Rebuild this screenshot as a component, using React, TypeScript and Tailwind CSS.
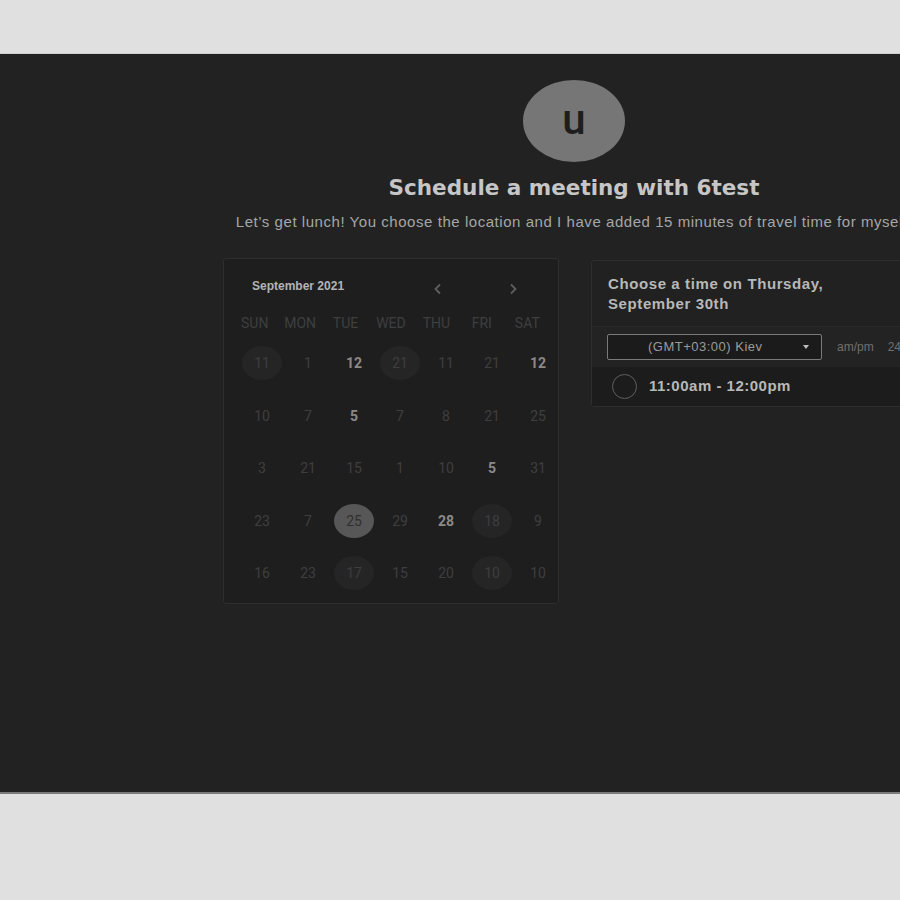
const rows: { n: string; kind?: 'bold' | 'ring' | 'sel' }[][] = [
  [{ n: '11', kind: 'ring' }, { n: '1' }, { n: '12', kind: 'bold' }, { n: '21', kind: 'ring' }, { n: '11' }, { n: '21' }, { n: '12', kind: 'bold' }],
  [{ n: '10' }, { n: '7' }, { n: '5', kind: 'bold' }, { n: '7' }, { n: '8' }, { n: '21' }, { n: '25' }],
  [{ n: '3' }, { n: '21' }, { n: '15' }, { n: '1' }, { n: '10' }, { n: '5', kind: 'bold' }, { n: '31' }],
  [{ n: '23' }, { n: '7' }, { n: '25', kind: 'sel' }, { n: '29' }, { n: '28', kind: 'bold' }, { n: '18', kind: 'ring' }, { n: '9' }],
  [{ n: '16' }, { n: '23' }, { n: '17', kind: 'ring' }, { n: '15' }, { n: '20' }, { n: '10', kind: 'ring' }, { n: '10' }],
];

const days = ['SUN', 'MON', 'TUE', 'WED', 'THU', 'FRI', 'SAT'];

function Calendar() {
  return (
    <div className="w-[336px] h-[346px] shrink-0 rounded-[3px] border border-[#2e2e2e] bg-[#1e1e1e] font-['Roboto',sans-serif]">
      <div className="flex items-center h-[53px] pl-[28px] pr-[40px] pt-[1px]">
        <span className="text-[12px] font-bold text-[#b4b4b4] font-['Liberation_Sans',sans-serif]">September 2021</span>
        <div className="ml-auto flex items-center gap-[65px] text-[#5e5e5e] mt-[6px]">
          <svg width="10" height="12" viewBox="0 0 10 12"><path d="M7 1.5 L2.5 6 L7 10.5" fill="none" stroke="currentColor" strokeWidth="1.8" /></svg>
          <svg width="10" height="12" viewBox="0 0 10 12"><path d="M3 1.5 L7.5 6 L3 10.5" fill="none" stroke="currentColor" strokeWidth="1.8" /></svg>
        </div>
      </div>
      <div className="grid grid-cols-7 px-[8px] text-[14px] text-[#3f3f3f] leading-none">
        {days.map((d) => (
          <div key={d} className="h-[22px] flex items-center justify-center">{d}</div>
        ))}
      </div>
      <div className="grid grid-cols-[repeat(7,46px)] pl-[15px] pt-[3px] text-[14px] leading-none">
        {rows.flat().map((c, i) => (
          <div key={i} className="h-[52.5px] flex items-center justify-center">
            <span
              className={
                c.kind === 'sel'
                  ? 'w-[40px] h-[34px] rounded-[50%] bg-[#575757] text-[#303030] flex items-center justify-center'
                  : c.kind === 'ring'
                  ? 'w-[40px] h-[34px] rounded-[50%] bg-[#252525] text-[#3e3e3e] flex items-center justify-center'
                  : c.kind === 'bold'
                  ? 'font-bold text-[#8a8a8a]'
                  : 'text-[#3e3e3e]'
              }
            >
              {c.n}
            </span>
          </div>
        ))}
      </div>
    </div>
  );
}

function TimePanel() {
  return (
    <div className="w-[336px] shrink-0 mt-[2px] self-start rounded-[3px] border border-[#2e2e2e] bg-[#212121] font-['Liberation_Sans',sans-serif]">
      <div className="px-[16px] pt-[13px] pb-[12px] border-b border-[#2a2a2a] text-[15px] font-bold leading-[20px] text-[#b8b8b8] tracking-[0.6px]">
        Choose a time on Thursday,<br />September 30th
      </div>
      <div className="flex items-center h-[40px] pl-[15px] bg-[#232323]">
        <div className="w-[215px] h-[26px] rounded-[2px] border border-[#7a7a7a] bg-[#1b1b1b] flex items-center text-[13px] tracking-[0.5px] text-[#9a9a9a]">
          <span className="ml-[40px]">(GMT+03:00) Kiev</span>
          <span className="ml-auto mr-[12px] w-0 h-0 border-l-[3px] border-r-[3px] border-t-[4px] border-l-transparent border-r-transparent border-t-[#bdbdbd]" />
        </div>
        <span className="ml-[15px] text-[12px] text-[#707070]">am/pm</span>
        <span className="ml-[14px] text-[12px] text-[#707070]">24h</span>
      </div>
      <div className="flex items-center h-[39px] pl-[20px] bg-[#1c1c1c]">
        <span className="w-[25px] h-[25px] rounded-full border-[1.5px] border-[#5f5f5f]" />
        <span className="ml-[12px] text-[15px] font-bold text-[#b8b8b8] tracking-[0.5px]">11:00am - 12:00pm</span>
      </div>
    </div>
  );
}

export default function App() {
  return (
    <main className="w-[900px] h-[900px] bg-[#e0e0e0] overflow-hidden">
      <div className="h-[53px]" />
      <section className="h-[741px] border-t border-[#cfcfcf] border-b-2 border-b-[#7a7a7a] bg-[#222222] overflow-hidden">
        <div className="w-[1148px] flex flex-col items-center font-['Liberation_Sans',sans-serif]">
          <div className="mt-[26px] w-[102px] h-[82px] rounded-[50%] bg-[#767676] flex items-center justify-center">
            <span className="text-[42px] leading-none font-medium text-[#1e1e1e] mb-[2px] font-['Roboto',sans-serif]">u</span>
          </div>
          <h1 className="mt-[14px] text-[21.5px] font-bold text-[#c6c6c6] leading-[24px] font-['DejaVu_Sans',sans-serif]">Schedule a meeting with 6test</h1>
          <p className="mt-[12px] text-[15px] tracking-[0.55px] text-[#a6a6a6] leading-[20px] whitespace-nowrap">
            Let’s get lunch! You choose the location and I have added 15 minutes of travel time for myself.
          </p>
          <div className="mt-[26px] flex gap-[32px] ml-[2px]">
            <Calendar />
            <TimePanel />
          </div>
        </div>
      </section>
    </main>
  );
}
